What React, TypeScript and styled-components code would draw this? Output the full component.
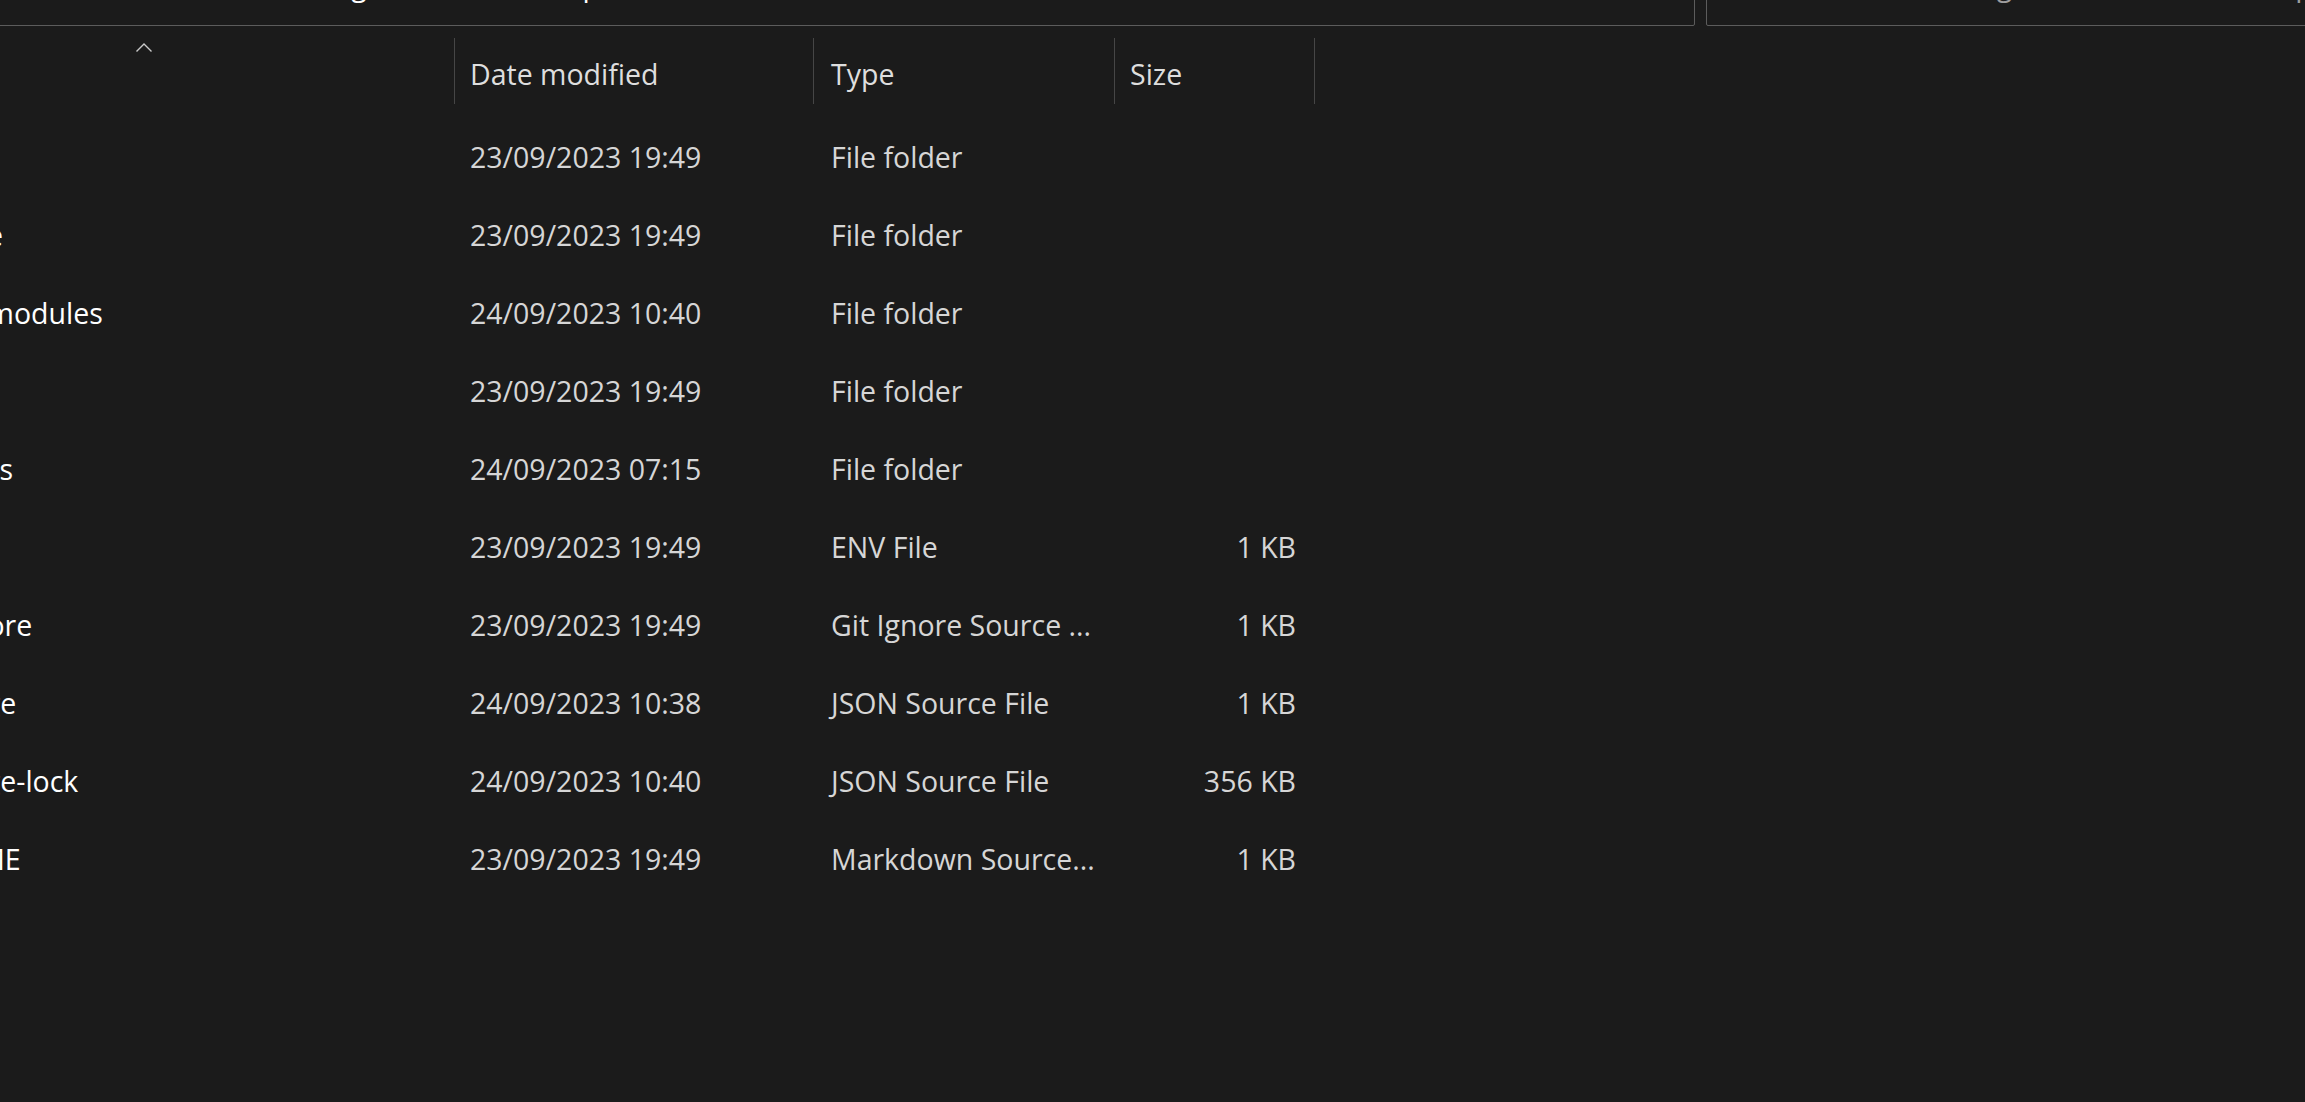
import React, { useLayoutEffect, useRef } from "react";
import styled, { createGlobalStyle } from "styled-components";

const SCROLL_X = 164;
const SCROLL_Y = 74;
const COLUMNS = "619px 359px 301px 200px";

const GlobalStyle = createGlobalStyle`
  html, body {
    margin: 0;
    padding: 0;
    background: #1b1b1b;
    overflow: hidden;
  }
  body {
    font-family: "Open Sans", "Noto Sans", sans-serif;
  }
`;

const Viewport = styled.div`
  width: 100vw;
  height: 100vh;
  overflow: hidden;
  background: #1b1b1b;
`;

const Frame = styled.div`
  width: 2700px;
  min-height: 1300px;
  box-sizing: border-box;
  padding-top: 20px;
  display: flex;
  flex-direction: column;
  gap: 12px;
`;

const NavBar = styled.div`
  display: flex;
  gap: 11px;
  height: 80px;
`;

const AddressBox = styled.div`
  width: 1859px;
  box-sizing: border-box;
  border: 1px solid #5c5c5c;
  border-radius: 2px;
  display: flex;
  align-items: center;
  gap: 22px;
  padding: 0 0 3px 60px;
  color: #ffffff;
  font-size: 28.5px;
`;

const Crumb = styled.span`
  white-space: nowrap;
`;

const SearchBox = styled.div`
  width: 700px;
  box-sizing: border-box;
  border: 1px solid #5c5c5c;
  border-radius: 2px;
  display: flex;
  align-items: center;
  padding: 0 0 3px 115px;
  color: #9d9d9d;
  font-size: 28.5px;
  white-space: nowrap;
`;

const List = styled.div`
  display: flex;
  flex-direction: column;
`;

const HeaderRow = styled.div`
  display: grid;
  grid-template-columns: ${COLUMNS};
  height: 66px;
  margin-bottom: 14px;
`;

const HeaderCell = styled.div<{ $pad?: number }>`
  position: relative;
  display: flex;
  align-items: center;
  box-sizing: border-box;
  padding: 5px 15px 0 ${(p) => p.$pad ?? 15}px;
  border-right: 1px solid #464646;
  color: #dedede;
  font-size: 28.5px;
  white-space: nowrap;
`;

const SortCaret = styled.svg`
  position: absolute;
  top: 5px;
  left: 300px;
`;

const Row = styled.div`
  display: grid;
  grid-template-columns: ${COLUMNS};
  height: 78px;
  align-items: center;
  font-size: 28.5px;
  white-space: nowrap;
`;

const NameCell = styled.div`
  display: flex;
  align-items: center;
  gap: 15px;
  padding-left: 16px;
  color: #ffffff;
`;

const TextCell = styled.div<{ $right?: boolean; $pad?: number }>`
  box-sizing: border-box;
  padding: 0 ${(p) => (p.$right ? "19px" : "15px")} 0 ${(p) => p.$pad ?? 15}px;
  text-align: ${(p) => (p.$right ? "right" : "left")};
  color: #d6d6d6;
  overflow: hidden;
`;

const Chevron = () => (
  <svg width="20" height="20" viewBox="0 0 20 20" fill="none">
    <path d="M7 4l6 6-6 6" stroke="#cfcfcf" strokeWidth="1.6" />
  </svg>
);

const FolderIcon = () => (
  <svg width="40" height="40" viewBox="0 0 40 40">
    <path d="M3 9h13l4 4h17v20H3z" fill="#e8b43c" />
    <path d="M3 15h34v18H3z" fill="#f7ce5b" />
  </svg>
);

const FileIcon = () => (
  <svg width="40" height="40" viewBox="0 0 40 40">
    <path d="M9 4h15l8 8v24H9z" fill="#f4f4f4" />
    <path d="M24 4v8h8" fill="#cfcfcf" />
  </svg>
);

type Item = {
  name: string;
  date: string;
  type: string;
  size: string;
  folder: boolean;
};

const items: Item[] = [
  { name: "api", date: "23/09/2023 19:49", type: "File folder", size: "", folder: true },
  { name: "archive", date: "23/09/2023 19:49", type: "File folder", size: "", folder: true },
  { name: "node_modules", date: "24/09/2023 10:40", type: "File folder", size: "", folder: true },
  { name: "public", date: "23/09/2023 19:49", type: "File folder", size: "", folder: true },
  { name: "uploads", date: "24/09/2023 07:15", type: "File folder", size: "", folder: true },
  { name: ".env", date: "23/09/2023 19:49", type: "ENV File", size: "1 KB", folder: false },
  { name: ".gitignore", date: "23/09/2023 19:49", type: "Git Ignore Source ...", size: "1 KB", folder: false },
  { name: "package", date: "24/09/2023 10:38", type: "JSON Source File", size: "1 KB", folder: false },
  { name: "package-lock", date: "24/09/2023 10:40", type: "JSON Source File", size: "356 KB", folder: false },
  { name: "README", date: "23/09/2023 19:49", type: "Markdown Source...", size: "1 KB", folder: false },
];

export default function App() {
  const viewRef = useRef<HTMLDivElement | null>(null);

  useLayoutEffect(() => {
    const el = viewRef.current;
    if (el) {
      el.scrollLeft = SCROLL_X;
      el.scrollTop = SCROLL_Y;
    }
  });

  return (
    <>
      <GlobalStyle />
      <Viewport
        ref={(el) => {
          viewRef.current = el;
          if (el) {
            el.scrollLeft = SCROLL_X;
            el.scrollTop = SCROLL_Y;
          }
        }}
      >
        <Frame>
          <NavBar>
            <AddressBox>
              <Crumb>This PC</Crumb>
              <Chevron />
              <Crumb>Documents</Crumb>
              <Chevron />
              <Crumb>Coding</Crumb>
              <Chevron />
              <Crumb>Node</Crumb>
              <Chevron />
              <Crumb>api</Crumb>
            </AddressBox>
            <SearchBox>Search Coding Node Server Demo api</SearchBox>
          </NavBar>
          <List>
            <HeaderRow>
              <HeaderCell>
                Name
                <SortCaret width="16" height="9" viewBox="0 0 16 9">
                  <polyline points="0.5,8.5 8,1 15.5,8.5" fill="none" stroke="#c9c9c9" strokeWidth="1.4" />
                </SortCaret>
              </HeaderCell>
              <HeaderCell>Date modified</HeaderCell>
              <HeaderCell $pad={17}>Type</HeaderCell>
              <HeaderCell>Size</HeaderCell>
            </HeaderRow>
            {items.map((it) => (
              <Row key={it.name}>
                <NameCell>
                  {it.folder ? <FolderIcon /> : <FileIcon />}
                  <span>{it.name}</span>
                </NameCell>
                <TextCell>{it.date}</TextCell>
                <TextCell $pad={17}>{it.type}</TextCell>
                <TextCell $right>{it.size}</TextCell>
              </Row>
            ))}
          </List>
        </Frame>
      </Viewport>
    </>
  );
}
